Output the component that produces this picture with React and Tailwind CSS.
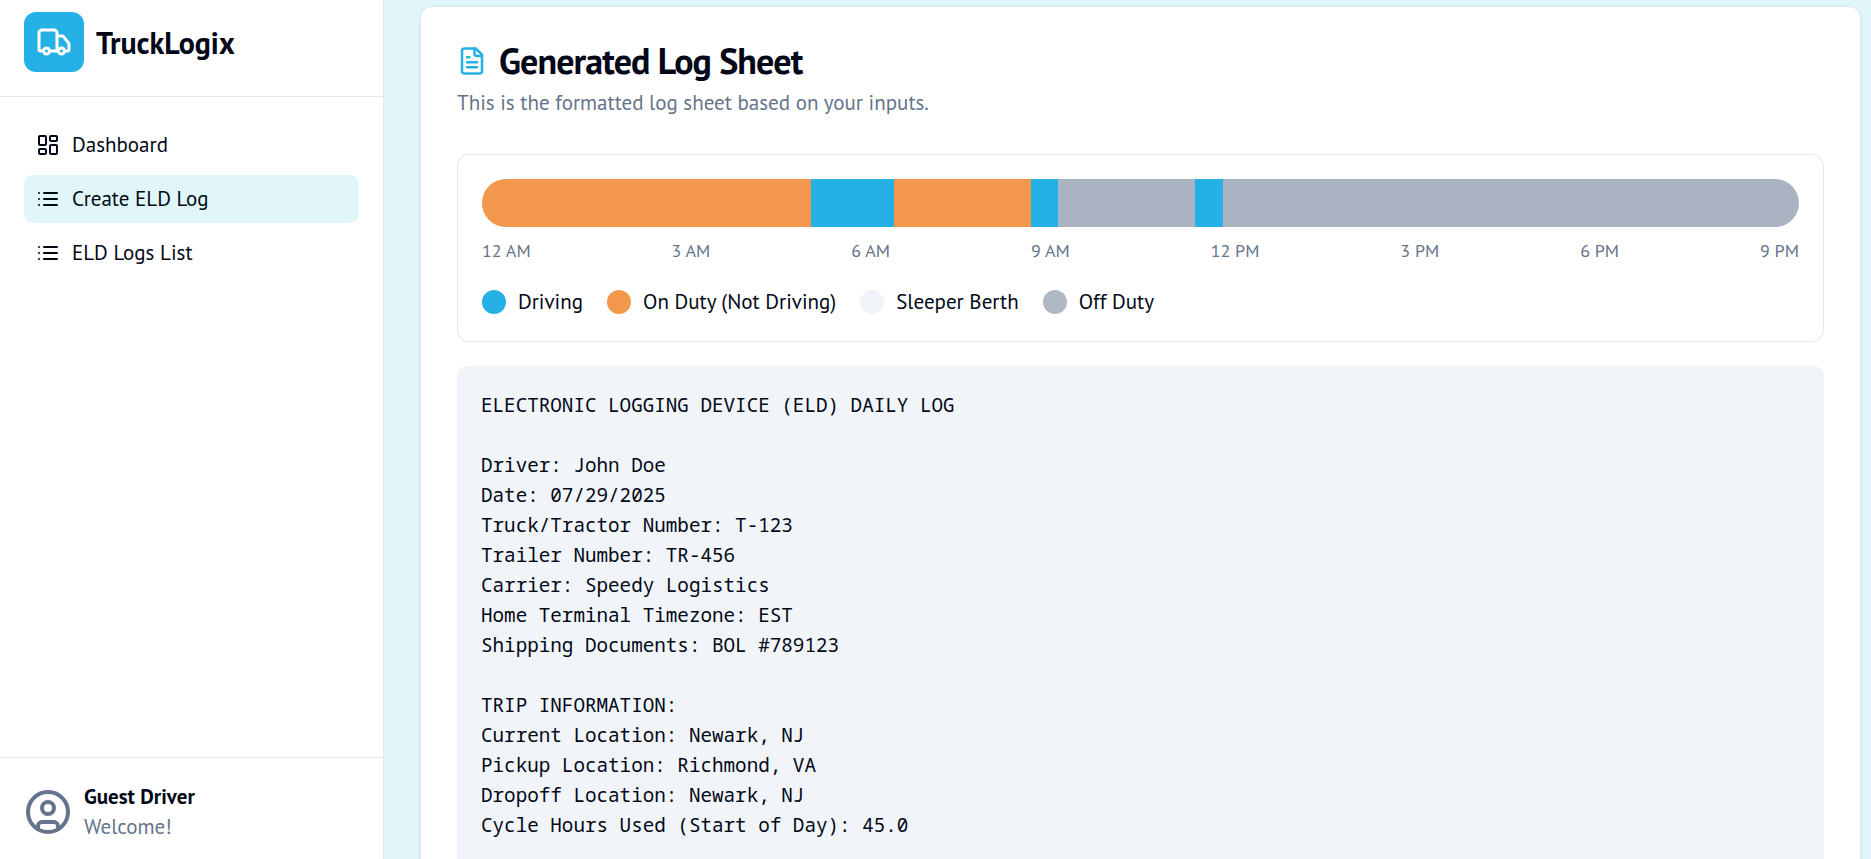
const stroke = {
  viewBox: "0 0 24 24",
  fill: "none",
  stroke: "currentColor",
  strokeWidth: 2,
  strokeLinecap: "round",
  strokeLinejoin: "round",
};

function TruckIcon({ className }) {
  return (
    <svg {...stroke} className={className}>
      <path d="M14 18V6a2 2 0 0 0-2-2H4a2 2 0 0 0-2 2v11a1 1 0 0 0 1 1h2" />
      <path d="M15 18H9" />
      <path d="M19 18h2a1 1 0 0 0 1-1v-3.65a1 1 0 0 0-.22-.624l-3.48-4.35A1 1 0 0 0 17.52 8H14" />
      <circle cx="17" cy="18" r="2" />
      <circle cx="7" cy="18" r="2" />
    </svg>
  );
}

function DashboardIcon({ className }) {
  return (
    <svg {...stroke} className={className}>
      <rect width="7" height="9" x="3" y="3" rx="1" />
      <rect width="7" height="5" x="14" y="3" rx="1" />
      <rect width="7" height="9" x="14" y="12" rx="1" />
      <rect width="7" height="5" x="3" y="16" rx="1" />
    </svg>
  );
}

function ListIcon({ className }) {
  return (
    <svg {...stroke} className={className}>
      <path d="M3 12h.01M3 18h.01M3 6h.01M8 12h13M8 18h13M8 6h13" />
    </svg>
  );
}

function FileTextIcon({ className }) {
  return (
    <svg {...stroke} className={className}>
      <path d="M15 2H6a2 2 0 0 0-2 2v16a2 2 0 0 0 2 2h12a2 2 0 0 0 2-2V7Z" />
      <path d="M14 2v4a2 2 0 0 0 2 2h4" />
      <path d="M10 9H8M16 13H8M16 17H8" />
    </svg>
  );
}

function UserIcon({ className }) {
  return (
    <svg {...stroke} className={className}>
      <circle cx="12" cy="12" r="10" />
      <circle cx="12" cy="10" r="3" />
      <path d="M7 20.662V19a2 2 0 0 1 2-2h6a2 2 0 0 1 2 2v1.662" />
    </svg>
  );
}

const nav = [
  { label: "Dashboard", Icon: DashboardIcon },
  { label: "Create ELD Log", Icon: ListIcon, active: true },
  { label: "ELD Logs List", Icon: ListIcon },
];

// Durations in minutes of the 24-hour day
const segments = [
  { color: "bg-[#f2974b]", minutes: 360 },
  { color: "bg-[#26b1e6]", minutes: 90 },
  { color: "bg-[#f2974b]", minutes: 150 },
  { color: "bg-[#26b1e6]", minutes: 30 },
  { color: "bg-[#aab3c2]", minutes: 150 },
  { color: "bg-[#26b1e6]", minutes: 30 },
  { color: "bg-[#aab3c2]", minutes: 630 },
];

const hours = ["12 AM", "3 AM", "6 AM", "9 AM", "12 PM", "3 PM", "6 PM", "9 PM"];

const legend = [
  { label: "Driving", color: "bg-[#26b1e6]" },
  { label: "On Duty (Not Driving)", color: "bg-[#f2974b]" },
  { label: "Sleeper Berth", color: "bg-[#f1f5f9]" },
  { label: "Off Duty", color: "bg-[#b0b8c4]" },
];

const log = `ELECTRONIC LOGGING DEVICE (ELD) DAILY LOG

Driver: John Doe
Date: 07/29/2025
Truck/Tractor Number: T-123
Trailer Number: TR-456
Carrier: Speedy Logistics
Home Terminal Timezone: EST
Shipping Documents: BOL #789123

TRIP INFORMATION:
Current Location: Newark, NJ
Pickup Location: Richmond, VA
Dropoff Location: Newark, NJ
Cycle Hours Used (Start of Day): 45.0
`;

function Sidebar() {
  return (
    <aside className="flex w-96 shrink-0 flex-col border-r border-[#e2e8f0] bg-white">
      <div className="flex h-[97px] items-start gap-3 border-b border-[#e2e8f0] px-6 pt-3">
        <div className="rounded-xl bg-[#26b1e6] p-3">
          <TruckIcon className="size-9 text-white" />
        </div>
        <span className="text-[30px] leading-[62px] font-bold">TruckLogix</span>
      </div>
      <nav className="flex flex-1 flex-col gap-1.5 px-6 pt-6">
        {nav.map(({ label, Icon, active }) => (
          <a
            key={label}
            className={
              active
                ? "flex h-12 items-center gap-3 rounded-[9px] bg-[#e0f6f9] px-3"
                : "flex h-12 items-center gap-3 rounded-[9px] px-3"
            }
          >
            <Icon className="size-6" />
            <span className="leading-[30px]">{label}</span>
          </a>
        ))}
      </nav>
      <div className="flex h-[102px] items-center gap-3 border-t border-[#e2e8f0] px-6 pt-[7px]">
        <UserIcon className="size-12 text-[#64748b]" />
        <div className="leading-[30px]">
          <p className="font-bold">Guest Driver</p>
          <p className="text-[#64748b]">Welcome!</p>
        </div>
      </div>
    </aside>
  );
}

export default function App() {
  return (
    <div className="flex h-[859px] overflow-hidden bg-[#e0f6f9] font-['PT_Sans','Open_Sans',sans-serif] text-[21px] text-[#020817]">
      <Sidebar />
      <main className="min-w-0 flex-1 pt-1.5 pr-2.5 pl-9">
        <section className="h-[900px] rounded-xl border border-[#e2e8f0] bg-white px-9 pt-9 shadow-sm">
          <div className="flex h-9 items-center gap-3">
            <FileTextIcon className="size-[30px] text-[#26b1e6]" />
            <h1 className="text-[36px] leading-9 font-bold tracking-[-0.9px]">Generated Log Sheet</h1>
          </div>
          <p className="mt-[9px] leading-[30px] text-[#64748b]">This is the formatted log sheet based on your inputs.</p>

          <div className="mt-9 rounded-xl border border-[#e2e8f0] p-6">
            <div className="flex h-12 overflow-hidden rounded-full">
              {segments.map((s, i) => (
                <div key={i} className={s.color} style={{ width: `${(s.minutes / 1440) * 100}%` }} />
              ))}
            </div>
            <div className="mt-3 flex justify-between text-[18px] leading-6 text-[#64748b]">
              {hours.map((h) => (
                <span key={h}>{h}</span>
              ))}
            </div>
            <div className="mt-6 flex gap-6">
              {legend.map((l) => (
                <div key={l.label} className="flex items-center gap-3">
                  <span className={`size-6 rounded-full ${l.color}`} />
                  <span className="leading-[30px]">{l.label}</span>
                </div>
              ))}
            </div>
          </div>

          <pre className="mt-6 h-[560px] rounded-[9px] bg-[#f1f5f9] p-6 font-['Noto_Sans_Mono','DejaVu_Sans_Mono',monospace] text-[19.25px] leading-[30px]">
            {log}
          </pre>
        </section>
      </main>
    </div>
  );
}
